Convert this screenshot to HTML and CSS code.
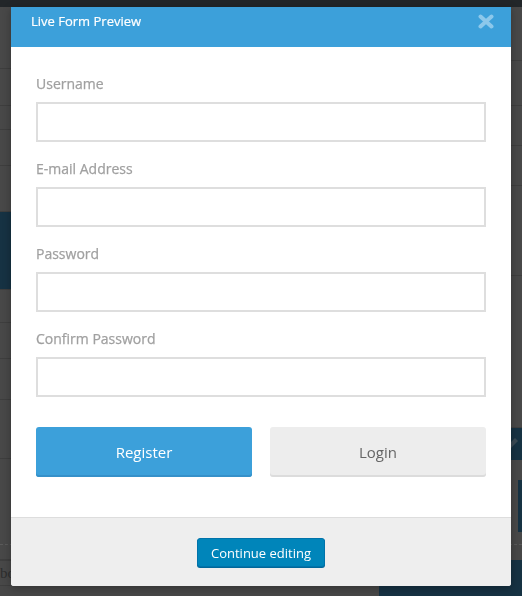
FILE: index.html
```html
<!DOCTYPE html>
<html lang="en">
<head>
    <meta charset="UTF-8">
    <meta name="viewport" content="width=device-width, initial-scale=1.0">
    <title>Live Form Preview</title>
    <link rel="stylesheet" href="styles.css">
</head>
<body>
    <div class="topbar"></div>
    <div class="backdrop">
        <div class="bg-col">
            <div class="bg-row" style="height: 62px"></div>
            <div class="bg-row" style="height: 37px"></div>
            <div class="bg-row" style="height: 24px"></div>
            <div class="bg-row" style="height: 36px"></div>
            <div class="bg-row" style="height: 46px"></div>
            <div class="bg-row bg-blue" style="height: 78px"></div>
            <div class="bg-row" style="height: 33px"></div>
            <div class="bg-row" style="height: 36px"></div>
            <div class="bg-row" style="height: 41px"></div>
            <div class="bg-row" style="height: 59px"></div>
            <div class="bg-row bg-dashed" style="height: 86px"></div>
            <div class="bg-row" style="height: 15px"></div>
            <div class="bg-row bg-text" style="height: 26px">box</div>
        </div>
        <div class="bg-col">
            <div class="bg-row" style="height: 54px"></div>
            <div class="bg-row" style="height: 45px"></div>
            <div class="bg-row" style="height: 40px"></div>
            <div class="bg-row" style="height: 40px"></div>
            <div class="bg-row" style="height: 90px"></div>
            <div class="bg-row" style="height: 152px"></div>
            <div class="bg-edit" style="height: 32px">
                <svg width="16" height="16" viewBox="0 0 16 16"><path d="M3 13 L4 9 L11 2 L14 5 L7 12 Z" fill="#3a4a55"/></svg>
            </div>
            <div class="bg-row bg-boxrow" style="height: 73px"><span class="bg-box"></span></div>
            <div class="bg-row bg-dashed" style="height: 12px"></div>
            <div class="bg-bottom">
                <span class="bg-bottom-blue"></span>
            </div>
        </div>
    </div>

    <div class="overlay">
        <div class="modal">
            <div class="modal-header">
                <span class="modal-title">Live Form Preview</span>
                <button class="modal-close" type="button" aria-label="Close">
                    <svg width="16" height="15" viewBox="0 0 16 15">
                        <path d="M2.5 2.5 L13.5 12.5 M13.5 2.5 L2.5 12.5" stroke="currentColor" stroke-width="4" stroke-linecap="round"/>
                    </svg>
                </button>
            </div>
            <div class="modal-body">
                <form class="reg-form">
                    <div class="field">
                        <label for="f-user">Username</label>
                        <input type="text" id="f-user">
                    </div>
                    <div class="field">
                        <label for="f-mail">E-mail Address</label>
                        <input type="email" id="f-mail">
                    </div>
                    <div class="field">
                        <label for="f-pass">Password</label>
                        <input type="password" id="f-pass">
                    </div>
                    <div class="field">
                        <label for="f-pass2">Confirm Password</label>
                        <input type="password" id="f-pass2">
                    </div>
                    <div class="form-actions">
                        <button type="button" class="btn btn-primary">Register</button>
                        <button type="button" class="btn btn-secondary">Login</button>
                    </div>
                </form>
            </div>
            <div class="modal-footer">
                <button type="button" class="wp-button">Continue editing</button>
            </div>
        </div>
    </div>
</body>
</html>
```

FILE: styles.css
```css
body {
  margin: 0;
  background: #474747;
  font-family: "Open Sans", Arial, sans-serif;
  overflow: hidden;
}

.topbar {
  height: 7px;
  background: #222629;
}

/* dimmed admin page behind the modal */
.backdrop {
  display: grid;
  grid-template-columns: 261px 1fr;
}

.bg-row {
  box-sizing: border-box;
  border-bottom: 1px solid #3e3e3e;
  background: #484848;
}

.bg-blue {
  background: #163243;
  border-bottom-color: #3e3e3e;
}

.bg-dashed {
  border-bottom: 1px dashed #5a5a5a;
}

.bg-text {
  border-top: 1px solid #3e3e3e;
  padding-top: 4px;
  color: #2e2e2e;
  font-family: "Liberation Serif", serif;
  font-size: 15px;
  text-align: right;
  padding-right: 252px;
}

.bg-edit {
  background: #163243;
  display: flex;
  align-items: center;
  justify-content: flex-end;
  padding-right: 2px;
}

.bg-boxrow {
  display: flex;
  justify-content: flex-end;
  padding-top: 20px;
  border-bottom: none;
}

.bg-box {
  width: 4px;
  height: 52px;
  background: #163243;
}

.bg-bottom {
  height: 40px;
  display: flex;
  justify-content: flex-end;
  padding-top: 15px;
}

.bg-bottom-blue {
  width: 143px;
  height: 40px;
  background: #163243;
}

/* modal */
.overlay {
  position: fixed;
  top: 0;
  left: 0;
  right: 0;
  bottom: 0;
  display: flex;
  justify-content: center;
  align-items: flex-start;
  padding-top: 7px;
}

.modal {
  width: 500px;
  background: #fff;
  border-radius: 0 0 3px 3px;
  overflow: hidden;
  box-shadow: 0 2px 8px rgba(0, 0, 0, 0.3);
}

.modal-header {
  height: 40px;
  box-sizing: border-box;
  background: #3ca0da;
  display: flex;
  justify-content: space-between;
  align-items: flex-start;
  padding: 4px 17px 0 20px;
}

.modal-title {
  color: #fff;
  font-size: 13px;
  line-height: 20px;
  -webkit-text-stroke: 0.2px #fff;
}

.modal-close {
  margin-top: 3px;
  padding: 0;
  border: none;
  background: none;
  color: #8cc8eb;
  display: flex;
  cursor: pointer;
}

.modal-body {
  padding: 27px 25px 40px;
}

.field {
  display: flex;
  flex-direction: column;
  margin-bottom: 17px;
}

.field label {
  color: #a0a0a0;
  font-size: 14px;
  line-height: 20px;
  margin-bottom: 8px;
  -webkit-text-stroke: 0.25px #a0a0a0;
}

.field input {
  height: 40px;
  box-sizing: border-box;
  border: 2px solid #dedede;
  border-radius: 0;
  padding: 0 10px;
  font-family: inherit;
  font-size: 14px;
  outline: none;
}

.form-actions {
  display: grid;
  grid-template-columns: 1fr 1fr;
  gap: 18px;
  margin-top: 30px;
}

.btn {
  height: 50px;
  border: none;
  border-radius: 3px;
  font-family: inherit;
  font-size: 15px;
  cursor: pointer;
}

.btn-primary {
  background: #3ca0da;
  color: #fff;
  box-shadow: inset 0 -2px 0 #3590c9;
}

.btn-secondary {
  background: #ededed;
  color: #666;
  box-shadow: inset 0 -2px 0 #dcdcdc;
}

.modal-footer {
  background: #eee;
  border-top: 1px solid #dddddd;
  padding: 20px 0 19px;
  text-align: center;
}

.wp-button {
  height: 29px;
  padding: 0 13px;
  background: #0085ba;
  border: 1px solid #0073aa;
  border-radius: 3px;
  box-shadow: 0 1px 0 #006799;
  color: #fff;
  font-family: inherit;
  font-size: 13px;
  cursor: pointer;
}
```
